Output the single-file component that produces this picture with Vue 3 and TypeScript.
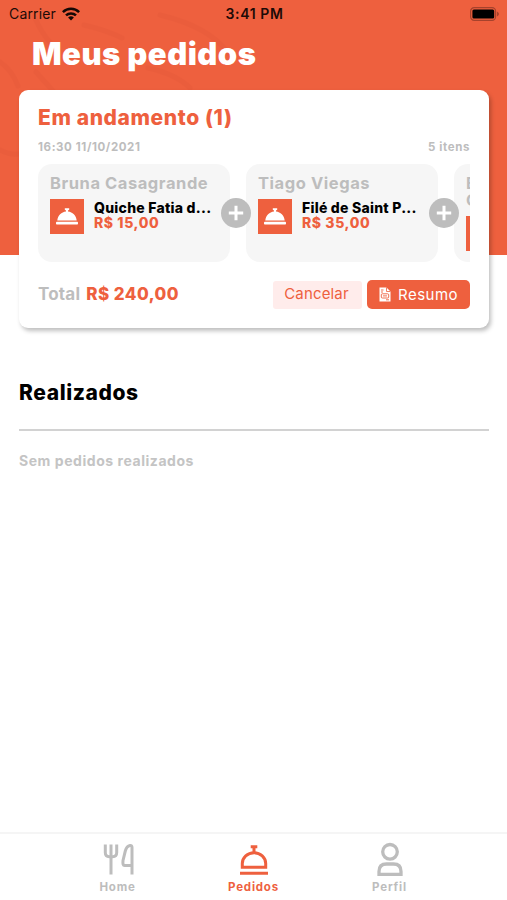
<script setup lang="ts">
interface OrderItem {
  customer: string
  dish: string
  price: string
}

interface Tab {
  id: 'home' | 'orders' | 'profile'
  label: string
}

const items: OrderItem[] = [
  { customer: 'Bruna Casagrande', dish: 'Quiche Fatia d...', price: 'R$ 15,00' },
  { customer: 'Tiago Viegas', dish: 'Filé de Saint P...', price: 'R$ 35,00' },
  { customer: 'Bernardo Casagrande', dish: '', price: '' },
]

const tabs: Tab[] = [
  { id: 'home', label: 'Home' },
  { id: 'orders', label: 'Pedidos' },
  { id: 'profile', label: 'Perfil' },
]

const active = 'orders'
</script>

<template>
  <div class="screen">
    <div class="hero">
      <svg class="texture" viewBox="0 0 240 255" fill="none" stroke="#e2583a" stroke-width="5" stroke-linecap="round">
        <path d="M34 16q8 18 16 26M84 25q22 5 38 13M160 15q50 12 68 38M36 72l18 20M148 68q28 6 42 20M0 62q12 8 18 24M0 150q10 5 18 4" />
      </svg>
    </div>

    <header class="status">
      <div class="carrier">
        <span class="carrier-name">Carrier</span>
        <svg class="wifi" viewBox="0 0 18 14" fill="none" stroke="#150805" stroke-width="2.5">
          <path d="M.9 5.1a11.6 11.6 0 0 1 16.2 0M4 8.4a7.2 7.2 0 0 1 10 0" />
          <path d="M9 13.5 6.1 10.6a4.2 4.2 0 0 1 5.8 0z" fill="#150805" stroke="none" />
        </svg>
      </div>
      <span class="clock">3:41 PM</span>
      <svg class="battery" viewBox="0 0 31 14">
        <rect x="1.6" y=".7" width="25" height="12.6" rx="3.6" fill="none" stroke="#a6422c" stroke-width="1.2" />
        <rect x="3.400" y="2.500" width="21.800" height="9" rx="1.500" fill="#000" />
        <path d="M28 4.5q4 2.5 0 5z" fill="#a6422c" />
      </svg>
    </header>

    <main>
      <h1>Meus pedidos</h1>

      <section class="card">
        <h2>Em andamento (1)</h2>
        <div class="meta">
          <span class="date">16:30 11/10/2021</span>
          <span class="count">5 itens</span>
        </div>

        <div class="strip">
          <template v-for="(item, i) in items" :key="item.customer">
            <article class="item">
              <div class="customer">{{ item.customer }}</div>
              <div class="row">
                <div class="thumb">
                  <svg viewBox="0 0 24 20" fill="#fff">
                    <path d="M9.8 1.2h4.4v1.5l-1.2.8v1c4.5.6 8.2 4 8.7 9H2.3c.5-5 4.2-8.4 8.7-9v-1l-1.2-.8z" />
                    <rect x="1" y="14.7" width="22" height="2.8" rx=".8" />
                  </svg>
                </div>
                <div v-if="item.dish" class="info">
                  <div class="dish">{{ item.dish }}</div>
                  <div class="price">{{ item.price }}</div>
                </div>
              </div>
            </article>
            <svg v-if="i < items.length - 1" class="plus" viewBox="0 0 30 30">
              <circle cx="15" cy="15" r="15" fill="#bdbdbd" />
              <path d="M15 7.8v14.4M7.8 15h14.4" stroke="#fff" stroke-width="3" />
            </svg>
          </template>
        </div>

        <div class="footer">
          <span class="total">Total</span>
          <strong class="amount">R$ 240,00</strong>
          <button class="cancel">Cancelar</button>
          <button class="summary">
            <svg viewBox="0 0 12 15">
              <path d="M.5.5h7l4 4V14.5H.5z" fill="#fff" />
              <path d="M7.5.5v4h4" fill="none" stroke="#ee603e" stroke-width=".8" />
              <path d="M2 3h2.5M2 5h2M7 12.8h3" stroke="#ee603e" stroke-width=".9" />
              <rect x="2.3" y="6.8" width="7.4" height="4.2" rx="1" fill="none" stroke="#ee603e" stroke-width=".9" />
              <path d="M4 8.9h4" stroke="#ee603e" stroke-width=".9" />
            </svg>
            <span>Resumo</span>
          </button>
        </div>
      </section>

      <section class="done">
        <h3>Realizados</h3>
        <p>Sem pedidos realizados</p>
      </section>
    </main>

    <nav class="tabs">
      <div v-for="tab in tabs" :key="tab.id" class="tab" :class="[tab.id, { active: tab.id === active }]">
        <svg v-if="tab.id === 'home'" viewBox="0 0 34 36" fill="none" stroke="currentColor" stroke-width="3">
          <path d="M4.300 2.500v8q0 4.200 4 4.200h3.400q4 0 4-4.200v-8M10 2.500v30" />
          <path d="M31 32.500V5.500q0-2.300-2-2-3.400.6-4.700 5.500l-2.300 9.500q-.5 5 1.500 5h7.500" stroke-linejoin="round" />
        </svg>
        <svg v-else-if="tab.id === 'orders'" viewBox="0 0 34 36" fill="none" stroke="currentColor" stroke-width="3">
          <path d="M5.300 25.200V21.500a11.700 10.800 0 0 1 23.400 0v3.700z" />
          <path d="M17 11V5M13.700 4.700h6.600M3 31.200h28" />
        </svg>
        <svg v-else viewBox="0 0 34 36" fill="none" stroke="currentColor" stroke-width="3.300">
          <circle cx="17" cy="9.800" r="7.300" />
          <path d="M6 32.300V29.500q0-7.500 7.500-7.500h7q7.500 0 7.500 7.500v2.800z" />
        </svg>
        <span>{{ tab.label }}</span>
      </div>
    </nav>
  </div>
</template>

<style>
body {
  margin: 0;
  background: #fff;
}
</style>

<style scoped>
* {
  box-sizing: border-box;
}

.screen {
  position: relative;
  width: 507px;
  height: 900px;
  display: flex;
  flex-direction: column;
  overflow: hidden;
  background: #fff;
  font-family: Inter, "Liberation Sans", sans-serif;
  white-space: nowrap;
}

.hero {
  position: absolute;
  inset: 0 0 auto;
  height: 255px;
  background: #ee603e;
}

.texture {
  display: block;
  width: 240px;
  height: 255px;
  opacity: 0.3;
}

.status {
  position: relative;
  height: 27px;
  padding: 0 7px 0 9px;
  display: grid;
  grid-template-columns: 1fr auto 1fr;
  align-items: center;
  color: #1d0b07;
  font-size: 14px;
  line-height: 27px;
}

.carrier {
  display: flex;
  align-items: center;
  gap: 6px;
}

.carrier-name {
  letter-spacing: 0.15px;
}

.wifi {
  width: 18px;
  height: 14px;
}

.clock {
  font-weight: 600;
  letter-spacing: 0.6px;
}

.battery {
  width: 31px;
  height: 14px;
  justify-self: end;
}

main {
  position: relative;
  flex: 1;
  padding: 0 18px 0 19px;
}

h1,
h2,
h3,
p {
  margin: 0;
}

h1 {
  height: 63px;
  padding-left: 13px;
  color: #fff;
  font-size: 31px;
  font-weight: 900;
  line-height: 54px;
  letter-spacing: 0.48px;
}

.card {
  height: 238px;
  padding: 14px 19px 0;
  border-radius: 9px;
  background: #fff;
  box-shadow: 2px 3px 4px rgba(0, 0, 0, 0.25);
}

h2 {
  color: #ee603e;
  font-size: 21px;
  font-weight: 800;
  line-height: 28px;
  letter-spacing: 0.6px;
}

.meta {
  display: flex;
  justify-content: space-between;
  height: 32px;
  color: #bdbdbd;
  font-size: 11.5px;
  font-weight: 700;
  line-height: 31px;
  letter-spacing: 0.6px;
}

.strip {
  display: flex;
  height: 98px;
  overflow: hidden;
}

.item {
  flex: 0 0 192px;
  margin-right: 16px;
  padding: 11px 12px 0;
  border-radius: 14px;
  background: #f6f6f6;
}

.customer {
  color: #bdbdbd;
  font-size: 16.5px;
  font-weight: 700;
  line-height: 17px;
  letter-spacing: 0.56px;
  white-space: normal;
}

.row {
  display: flex;
  gap: 10px;
  margin-top: 7px;
}

.thumb {
  display: grid;
  place-items: center;
  width: 34px;
  height: 35px;
  background: #ee603e;
}

.thumb svg {
  width: 24px;
  height: 20px;
}

.info {
  padding-top: 1px;
  font-size: 14px;
  font-weight: 800;
  line-height: 15px;
}

.dish {
  color: #000;
  letter-spacing: 0.25px;
}

.price {
  color: #ee603e;
  letter-spacing: 0.6px;
}

.plus {
  position: relative;
  flex: 0 0 30px;
  height: 30px;
  margin: 34px -5px 0 -25px;
}

.footer {
  display: flex;
  align-items: center;
  height: 65px;
  font-size: 17px;
}

.total {
  color: #bdbdbd;
  font-weight: 700;
  letter-spacing: 0.2px;
  line-height: 20px;
  padding-bottom: 1px;
}

.amount {
  margin-left: 6px;
  padding-bottom: 1px;
  color: #ee603e;
  font-weight: 800;
  line-height: 20px;
  letter-spacing: 0.45px;
}

button {
  height: 29px;
  padding: 0;
  border: 0;
  font: 400 15px/29px Inter, "Liberation Sans", sans-serif;
}

.cancel {
  width: 89px;
  height: 28px;
  margin-left: auto;
  padding: 0 2px 3px 0;
  border-radius: 3px;
  background: #ffeceb;
  color: #ee603e;
  line-height: 25px;
  letter-spacing: 0.15px;
}

.summary {
  display: flex;
  align-items: center;
  width: 103px;
  margin-left: 5px;
  padding-left: 12px;
  border-radius: 5px;
  background: #ee603e;
  color: #fff;
  letter-spacing: 0.5px;
}

.summary svg {
  width: 12px;
  height: 15px;
  margin-right: 7px;
}

.done {
  padding-top: 50px;
}

h3 {
  height: 53px;
  border-bottom: 2px solid #d2d2d2;
  color: #000;
  font-size: 21px;
  font-weight: 800;
  line-height: 29px;
  letter-spacing: 0.6px;
}

p {
  color: #c4c4c4;
  font-size: 14px;
  font-weight: 700;
  line-height: 60px;
  letter-spacing: 0.55px;
}

.tabs {
  display: flex;
  justify-content: center;
  height: 68px;
  border-top: 2px solid #f5f5f5;
}

.tab {
  display: flex;
  flex: 0 0 136px;
  flex-direction: column;
  align-items: center;
  padding-top: 8px;
  color: #bdbdbd;
  font-size: 11.5px;
  font-weight: 700;
  line-height: 18px;
  letter-spacing: 0.8px;
}

.tab.active {
  color: #ee603e;
}

.tab svg {
  width: 34px;
  height: 36px;
}
</style>
